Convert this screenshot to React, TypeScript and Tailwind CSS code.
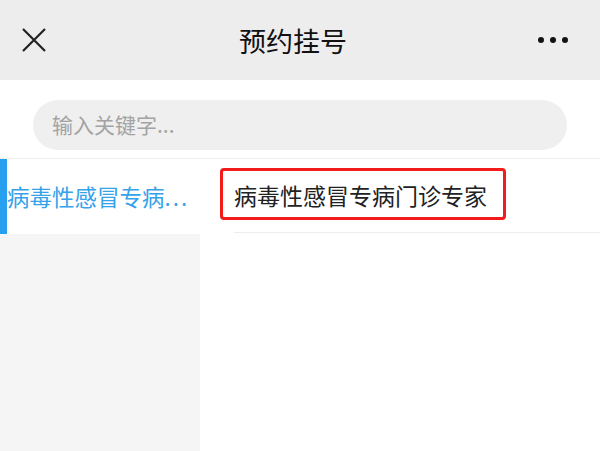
const font = "font-['Noto_Sans_CJK_SC','Noto_Sans',sans-serif]";

function CloseIcon() {
  return (
    <svg width="24" height="24" viewBox="0 0 24 24" className="text-[#222]">
      <path d="M1 1 L23 23 M23 1 L1 23" stroke="currentColor" strokeWidth="2.2" fill="none" />
    </svg>
  );
}

function MoreIcon() {
  return (
    <div className="flex items-center gap-[6px]">
      <span className="w-[6px] h-[6px] rounded-full bg-[#111]" />
      <span className="w-[6px] h-[6px] rounded-full bg-[#111]" />
      <span className="w-[6px] h-[6px] rounded-full bg-[#111]" />
    </div>
  );
}

export default function App() {
  return (
    <div className={`h-[451px] w-[600px] flex flex-col bg-white overflow-hidden ${font}`}>
      {/* top bar */}
      <div className="h-[80px] shrink-0 bg-[#ededed] flex items-center justify-between pl-[22px] pr-[32px]">
        <CloseIcon />
        <div className="text-[27px] text-[#111] leading-none ml-[2px]">预约挂号</div>
        <MoreIcon />
      </div>

      {/* search */}
      <div className="shrink-0 pt-[20px] pb-[8px] px-[33px] border-b border-[#eeeeee]">
        <div className="h-[50px] rounded-full bg-[#efefef] flex items-center pl-[19px] text-[21px] text-[#a3a3a3]">
          输入关键字...
        </div>
      </div>

      {/* body */}
      <div className="flex flex-1 min-h-0">
        <div className="w-[200px] shrink-0 flex flex-col">
          <div className="h-[75px] shrink-0 bg-white border-l-[7px] border-[#28a0f0] flex items-center">
            <span className="text-[22.5px] text-[#35a2ea] whitespace-nowrap leading-none">
              病毒性感冒专病<span className="tracking-[2px]">...</span>
            </span>
          </div>
          <div className="flex-1 bg-[#f5f5f5]" />
        </div>

        <div className="flex-1 flex flex-col">
          <div className="relative ml-[34px] h-[74px] flex items-center border-b border-[#eeeeee]">
            <span className="text-[23px] text-[#222] leading-none whitespace-nowrap">
              病毒性感冒专病门诊专家
            </span>
            <div className="absolute left-[-14px] top-[9px] w-[286px] h-[52px] border-[3px] border-[#f41b1b] rounded-[4px]" />
          </div>
        </div>
      </div>
    </div>
  );
}
